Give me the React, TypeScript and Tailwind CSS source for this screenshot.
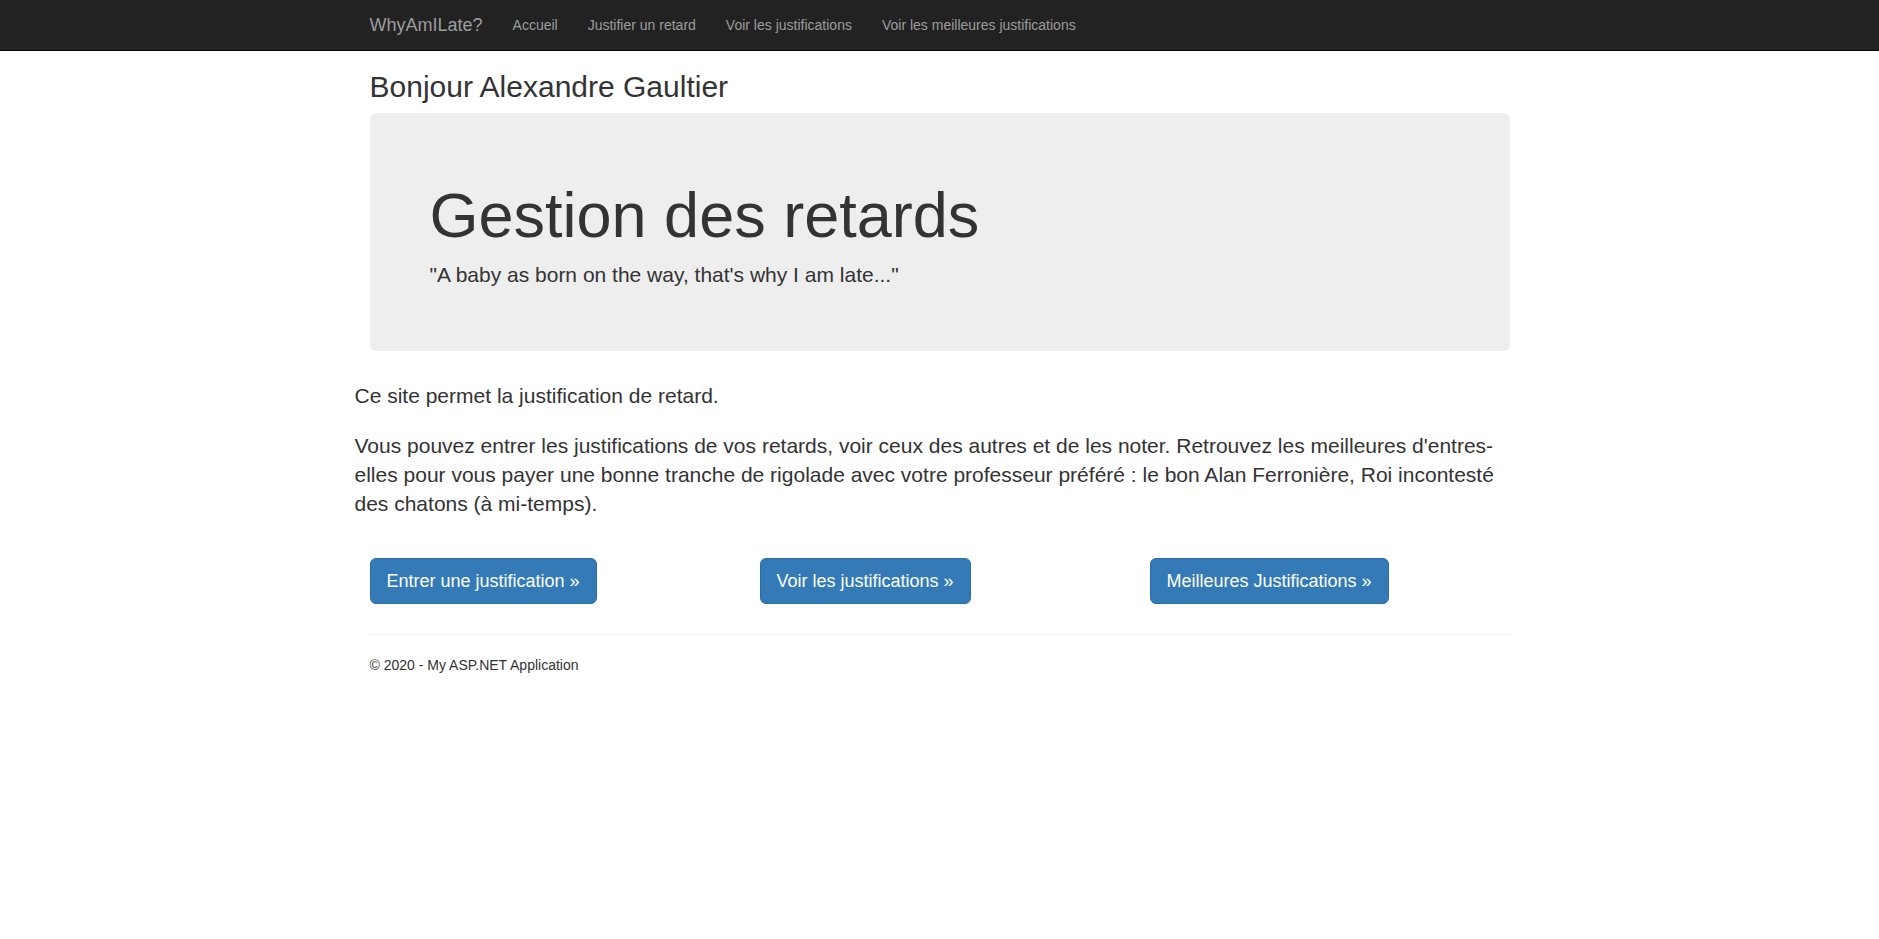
import React from "react";

const navLinks = [
  "Accueil",
  "Justifier un retard",
  "Voir les justifications",
  "Voir les meilleures justifications",
];

const actions = [
  "Entrer une justification »",
  "Voir les justifications »",
  "Meilleures Justifications »",
];

function App() {
  return (
    <div
      className="min-h-screen bg-white text-[#333] text-[14px] leading-[1.42857143]"
      style={{ fontFamily: '"Liberation Sans", Arial, Helvetica, sans-serif' }}
    >
      {/* barre de navigation */}
      <nav className="h-[51px] bg-[#222] border-b border-[#080808]">
        <div className="w-[1170px] mx-auto px-[15px] flex items-center">
          <a className="-ml-[15px] px-[15px] py-[15px] text-[18px] leading-5 text-[#9d9d9d] cursor-pointer">
            WhyAmILate?
          </a>
          <ul className="flex">
            {navLinks.map((label) => (
              <li key={label}>
                <a className="block p-[15px] text-[14px] leading-5 text-[#9d9d9d] cursor-pointer">
                  {label}
                </a>
              </li>
            ))}
          </ul>
        </div>
      </nav>

      <div className="w-[1170px] mx-auto px-[15px]">
        <h2 className="mt-[19px] mb-[10px] text-[30px] leading-[1.1] font-normal">
          Bonjour Alexandre Gaultier
        </h2>

        {/* jumbotron */}
        <div className="bg-[#eee] rounded-[6px] px-[60px] py-[48px] mb-[30px]">
          <h1 className="mt-[20px] mb-[10px] text-[63px] leading-[1.1] font-normal">
            Gestion des retards
          </h1>
          <p className="mb-[13px] text-[21px] leading-[1.42857143]">
            "A baby as born on the way, that's why I am late..."
          </p>
        </div>

        <div className="-mx-[15px]">
          <p className="mb-5 text-[21px] leading-[1.4]">
            Ce site permet la justification de retard.
          </p>
          <p className="mb-5 text-[21px] leading-[1.4]">
            Vous pouvez entrer les justifications de vos retards, voir ceux des autres et de les noter.
            Retrouvez les meilleures d'entres-elles pour vous payer une bonne tranche de rigolade avec
            votre professeur préféré : le bon Alan Ferronière, Roi incontesté des chatons (à mi-temps).
          </p>
        </div>

        <div className="-mx-[15px] grid grid-cols-3 pt-[19px]">
          {actions.map((label) => (
            <div key={label} className="px-[15px]">
              <p className="mb-[10px]">
                <a className="inline-block align-top bg-[#337ab7] border border-[#2e6da4] rounded-[6px] px-4 py-[10px] text-[18px] leading-[1.3333333] text-white cursor-pointer">
                  {label}
                </a>
              </p>
            </div>
          ))}
        </div>

        <hr className="mt-5 mb-5 border-0 border-t border-[#eee]" />
        <footer>
          <p className="mb-[10px]">© 2020 - My ASP.NET Application</p>
        </footer>
      </div>
    </div>
  );
}

export default App;
